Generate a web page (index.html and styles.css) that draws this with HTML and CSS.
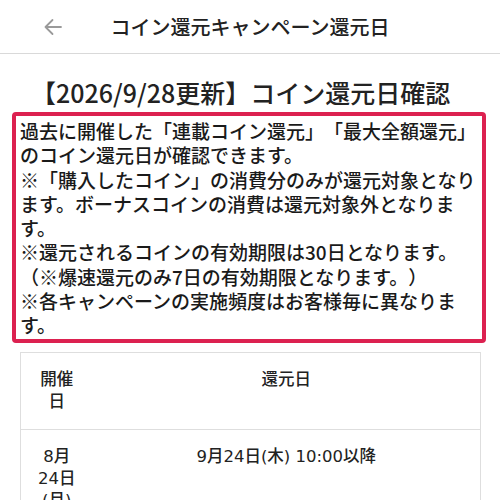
FILE: index.html
```html
<!DOCTYPE html>
<html lang="ja">
<head>
<meta charset="utf-8">
<title>コイン還元キャンペーン還元日</title>
<link rel="stylesheet" href="styles.css">
</head>
<body>
<header class="topbar">
  <span class="back">
    <svg width="20" height="20" viewBox="0 0 20 20" aria-hidden="true">
      <path d="M18 10 H2.5 M9.5 3 L2.5 10 L9.5 17" fill="none" stroke="#9a9a9a" stroke-width="1.8" stroke-linecap="round" stroke-linejoin="round"/>
    </svg>
  </span>
  <h1 class="topbar-title">コイン還元キャンペーン還元日</h1>
</header>
<main class="content">
  <h2 class="heading">【2026/9/28更新】コイン還元日確認</h2>
  <div class="notice">
    <p>過去に開催した「連載コイン還元」「最大全額還元」のコイン還元日が確認できます。</p>
    <p>※「購入したコイン」の消費分のみが還元対象となります。ボーナスコインの消費は還元対象外となります。</p>
    <p>※還元されるコインの有効期限は30日となります。</p>
    <p>（※爆速還元のみ7日の有効期限となります。）</p>
    <p>※各キャンペーンの実施頻度はお客様毎に異なります。</p>
  </div>
  <table class="dates">
    <colgroup><col class="col-held"><col></colgroup>
    <thead>
      <tr><th>開催日</th><th>還元日</th></tr>
    </thead>
    <tbody>
      <tr><td>8月24日(月)</td><td>9月24日(木) 10:00以降</td></tr>
    </tbody>
  </table>
</main>
</body>
</html>
```
FILE: styles.css
```css
html, body {
  margin: 0;
  padding: 0;
  background: #fff;
}
body {
  font-family: "Noto Sans CJK JP", "Noto Sans", sans-serif;
  color: #222;
  text-spacing-trim: space-all;
  font-weight: 500;
}
.topbar {
  height: 54px;
  border-bottom: 1px solid #d9d9d9;
  display: flex;
  align-items: center;
  justify-content: center;
  position: relative;
  box-sizing: border-box;
}
.back {
  position: absolute;
  left: 43px;
  top: 17px;
  width: 20px;
  height: 20px;
}
.back svg { display: block; }
.topbar-title {
  margin: 0;
  font-size: 20px;
  font-weight: 500;
  line-height: 28px;
  color: #222;
}
.content {
  padding: 0 12px;
}
.heading {
  margin: 22px 0 0 19px;
  font-size: 25px;
  font-weight: 500;
  line-height: 32px;
  color: #222;
}
.notice {
  margin-top: 4px;
  border: 4px solid #dc2150;
  border-radius: 4px;
  padding: 3px 4px 2px;
  width: 458px;
  box-sizing: content-box;
  font-size: 19px;
  line-height: 24.25px;
  color: #1a1a1a;
}
.notice p {
  margin: 0;
}
.dates {
  margin: 9px 8px 0;
  width: 461px;
  border-collapse: collapse;
  table-layout: fixed;
  font-family: "DejaVu Sans", "Noto Sans CJK JP", sans-serif;
  font-size: 16.5px;
  line-height: 22px;
}
.col-held { width: 72px; }
.dates th, .dates td {
  border-top: 1px solid #dedede;
  border-bottom: 1px solid #dedede;
  padding: 16px;
  text-align: center;
  vertical-align: top;
  font-weight: 500;
  color: #222;
}
.dates th:first-child, .dates td:first-child { border-left: 1px solid #dedede; }
.dates th:last-child, .dates td:last-child { border-right: 1px solid #dedede; }
```
